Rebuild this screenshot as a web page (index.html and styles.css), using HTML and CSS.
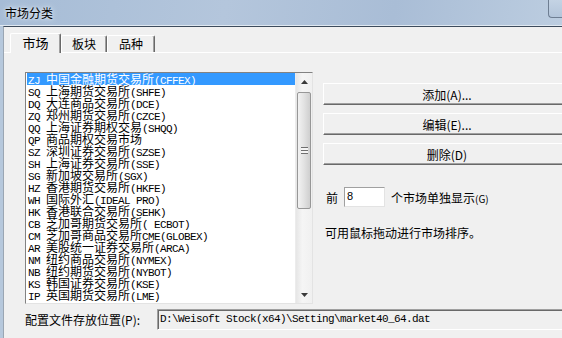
FILE: index.html
```html
<!DOCTYPE html>
<html lang="zh-CN">
  <head>
    <meta charset="UTF-8" />
    <title>市场分类</title>
    <link rel="stylesheet" href="styles.css">
  </head>
  <body>
    <div class="window">
      <div class="titlebar">
        <span class="title">市场分类</span>
        <span class="close"></span>
      </div>
      <div class="frame">
        <div class="client">
          <div class="tabs">
            <div class="tab active">市场</div>
            <div class="tab">板块</div>
            <div class="tab">品种</div>
          </div>
          <div class="panel">
            <div class="main">
              <div class="listbox">
                <ul class="list">
                  <li class="sel"><span class="a">ZJ </span>中国金融期货交易所<span class="a">(CFFEX)</span></li>
                  <li><span class="a">SQ </span>上海期货交易所<span class="a">(SHFE)</span></li>
                  <li><span class="a">DQ </span>大连商品交易所<span class="a">(DCE)</span></li>
                  <li><span class="a">ZQ </span>郑州期货交易所<span class="a">(CZCE)</span></li>
                  <li><span class="a">QQ </span>上海证券期权交易<span class="a">(SHQQ)</span></li>
                  <li><span class="a">QP </span>商品期权交易市场</li>
                  <li><span class="a">SZ </span>深圳证券交易所<span class="a">(SZSE)</span></li>
                  <li><span class="a">SH </span>上海证券交易所<span class="a">(SSE)</span></li>
                  <li><span class="a">SG </span>新加坡交易所<span class="a">(SGX)</span></li>
                  <li><span class="a">HZ </span>香港期货交易所<span class="a">(HKFE)</span></li>
                  <li><span class="a">WH </span>国际外汇<span class="a">(IDEAL PRO)</span></li>
                  <li><span class="a">HK </span>香港联合交易所<span class="a">(SEHK)</span></li>
                  <li><span class="a">CB </span>芝加哥期货交易所<span class="a">( ECBOT)</span></li>
                  <li><span class="a">CM </span>芝加哥商品交易所<span class="a">CME(GLOBEX)</span></li>
                  <li><span class="a">AR </span>美股统一证券交易所<span class="a">(ARCA)</span></li>
                  <li><span class="a">NM </span>纽约商品交易所<span class="a">(NYMEX)</span></li>
                  <li><span class="a">NB </span>纽约期货交易所<span class="a">(NYBOT)</span></li>
                  <li><span class="a">KS </span>韩国证券交易所<span class="a">(KSE)</span></li>
                  <li><span class="a">IP </span>英国期货交易所<span class="a">(LME)</span></li>
                </ul>
                <div class="vscroll">
                  <div class="arrow">
                    <svg width="7" height="4" viewBox="0 0 7 4"><path d="M3.5 0L7 4H0z" fill="#3a3a3a"/></svg>
                  </div>
                  <div class="track">
                    <div class="thumb"><span class="grip"></span></div>
                  </div>
                  <div class="arrow">
                    <svg width="7" height="4" viewBox="0 0 7 4"><path d="M0 0H7L3.5 4z" fill="#3a3a3a"/></svg>
                  </div>
                </div>
              </div>
              <div class="side">
                <button class="btn">添加(A)...</button>
                <button class="btn">编辑(E)...</button>
                <button class="btn">删除(D)</button>
                <div class="count">
                  <span>前</span>
                  <span class="num">8</span>
                  <span>个市场单独显示<small>(G)</small></span>
                </div>
                <p class="hint">可用鼠标拖动进行市场排序。</p>
              </div>
            </div>
            <div class="path-row">
              <label>配置文件存放位置(P):</label>
              <div class="path">D:\Weisoft Stock(x64)\Setting\market40_64.dat</div>
            </div>
          </div>
        </div>
      </div>
    </div>
  </body>
</html>
```

FILE: styles.css
```css
* {
  padding: 0px;
  margin: 0px;
  box-sizing: border-box;
}
body {
  width: 562px;
  height: 338px;
  overflow: hidden;
  background: #b6c8dc;
  font-family: "Noto Sans CJK SC", "Liberation Sans", sans-serif;
  font-size: 12px;
  color: #000;
}
.window {
  display: flex;
  flex-direction: column;
  height: 338px;
}
.titlebar {
  height: 26px;
  display: flex;
  align-items: flex-start;
  padding-left: 5px;
  background: linear-gradient(100deg, #a6bcd6 0%, #b4c6dc 40%, #a9bdd6 70%, #bccde0 100%);
  border-bottom: 1px solid #dfe8f1;
}
.title {
  margin-top: 5px;
  line-height: 16px;
  text-shadow: 0 0 6px #e8f0f8, 0 0 3px #e8f0f8;
}
.close {
  margin-left: auto;
  width: 14px;
  height: 18px;
  border: 1px solid #6e7e92;
  border-top: none;
  border-right: none;
  border-bottom-left-radius: 4px;
  background: linear-gradient(#c4d3e4, #b3c5da);
}
.frame {
  flex: 1;
  display: flex;
  padding-left: 3px;
}
.client {
  flex: 1;
  background: #f0f0f0;
  border-top: 1px solid #3d4b5c;
  border-left: 1px solid #9aa6b3;
  padding-top: 6px;
}

/* 选项卡 */
.tabs {
  display: flex;
  align-items: flex-end;
  height: 19px;
  padding-left: 6px;
}
.tab {
  height: 17px;
  line-height: 15px;
  text-align: center;
  border-top: 1px solid #fff;
  border-left: 1px solid #fff;
  border-right: 1px solid #696969;
  border-top-left-radius: 2px;
  border-top-right-radius: 2px;
  box-shadow: inset -1px 0 #a0a0a0;
  background: #f0f0f0;
}
.tab:nth-child(1) {
  width: 51px;
}
.tab:nth-child(2) {
  width: 46px;
}
.tab:nth-child(3) {
  width: 48px;
}
.tab.active {
  height: 20px;
  line-height: 18px;
  font-size: 13px;
  margin-bottom: -1px;
  position: relative;
}
.panel {
  border-top: 1px solid #fff;
  padding: 19px 0 0 21px;
}
.main {
  display: flex;
  gap: 10px;
  align-items: flex-start;
}

/* 列表框 */
.listbox {
  width: 288px;
  height: 232px;
  display: flex;
  background: #fff;
  border-top: 1px solid #828282;
  border-left: 1px solid #828282;
  border-right: 1px solid #e3e3e3;
  border-bottom: 1px solid #e3e3e3;
  padding-left: 1px;
}
.list {
  flex: 1;
  list-style: none;
  overflow: hidden;
}
.list li {
  height: 12px;
  line-height: 12px;
  padding-left: 1px;
  white-space: nowrap;
}
.list li.sel {
  background: #3399ff;
  color: #fff;
}
.a {
  font-family: "Liberation Mono", monospace;
  font-size: 11px;
  letter-spacing: -0.6px;
  white-space: pre;
}
.vscroll {
  width: 17px;
  display: flex;
  flex-direction: column;
  background: linear-gradient(90deg, #e6e6e6, #f5f5f5 40%, #f0f0f0);
  border-left: 1px solid #ececec;
}
.arrow {
  height: 17px;
  display: flex;
  align-items: center;
  justify-content: center;
}
.track {
  flex: 1;
  padding: 2px 1px 0 1px;
}
.thumb {
  height: 117px;
  border: 1px solid #979797;
  border-radius: 2px;
  background: linear-gradient(90deg, #f2f2f2, #e4e4e4 45%, #cfcfcf);
  display: flex;
  align-items: center;
  justify-content: center;
}
.grip {
  width: 7px;
  height: 7px;
  background: repeating-linear-gradient(#6f6f6f 0 1px, #f4f4f4 1px 3px);
}

/* 右侧按钮区 */
.side {
  width: 248px;
  flex-shrink: 0;
  display: flex;
  flex-direction: column;
  padding-top: 11px;
}
.btn {
  height: 22px;
  margin-bottom: 8px;
  font-family: "Noto Sans CJK SC", sans-serif;
  font-size: 12px;
  background: #f0f0f0;
  border-top: 1px solid #fff;
  border-left: 1px solid #fff;
  border-right: 1px solid #696969;
  border-bottom: 1px solid #696969;
  box-shadow: inset -1px -1px #a0a0a0;
}
.count {
  display: flex;
  align-items: center;
  margin-top: 14px;
  padding-left: 3px;
}
.num {
  width: 41px;
  height: 20px;
  margin: 0 6px;
  background: #fff;
  border-top: 1px solid #a0a0a0;
  border-left: 1px solid #a0a0a0;
  border-right: 1px solid #e3e3e3;
  border-bottom: 1px solid #e3e3e3;
  font-family: "Liberation Sans", sans-serif;
  font-size: 11px;
  line-height: 17px;
  padding-left: 2px;
}
.count small {
  font-size: 10px;
}
.hint {
  margin-top: 17px;
  padding-left: 2px;
}

/* 配置文件路径 */
.path-row {
  display: flex;
  align-items: center;
  margin-top: 5px;
}
.path-row label {
  width: 132px;
  flex-shrink: 0;
}
.path {
  width: 420px;
  flex-shrink: 0;
  height: 21px;
  line-height: 18px;
  padding-left: 2px;
  border-top: 1px solid #a0a0a0;
  border-left: 1px solid #a0a0a0;
  border-bottom: 1px solid #fff;
  box-shadow: inset 1px 1px #696969;
  font-family: "Liberation Mono", monospace;
  font-size: 11px;
  letter-spacing: -0.6px;
  white-space: pre;
}
```
